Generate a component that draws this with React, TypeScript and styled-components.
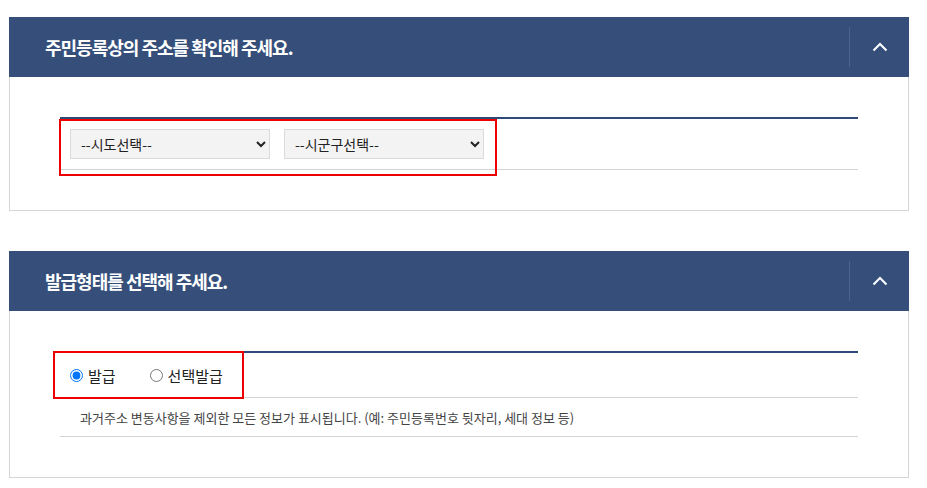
import React from "react";
import styled, { createGlobalStyle } from "styled-components";

const Global = createGlobalStyle`
  html, body { margin: 0; padding: 0; background: #ffffff; }
  body { font-family: "Noto Sans CJK KR", "Noto Sans", sans-serif; color: #222; }
`;

const Page = styled.div`
  padding: 17px 18px 11px 9px;
  display: flex;
  flex-direction: column;
  gap: 40px;
`;

const Panel = styled.section`
  display: flex;
  flex-direction: column;
  border: 1px solid #d6d6d6;
  border-top: none;
`;

const Header = styled.header`
  height: 60px;
  margin: 0 -1px;
  background: #354f7a;
  display: flex;
  align-items: center;
`;

const Title = styled.h2`
  flex: 1;
  margin: 0;
  padding-left: 36px;
  color: #ffffff;
  font-size: 18px;
  font-weight: 700;
  letter-spacing: -1px;
`;

const Toggle = styled.button`
  width: 60px;
  height: 40px;
  border: none;
  border-left: 1px solid #4a6390;
  background: transparent;
  display: flex;
  align-items: center;
  justify-content: center;
  padding: 0;
  cursor: pointer;
`;

const Body = styled.div`
  position: relative;
  padding: 40px 50px 40px 50px;
`;

const Table = styled.div`
  border-top: 2px solid #2f4a77;
  display: flex;
  flex-direction: column;
`;

const Row = styled.div<{ $h: number; $pad: number }>`
  height: ${(p) => p.$h}px;
  padding-left: ${(p) => p.$pad}px;
  border-bottom: 1px solid #d4d4d4;
  display: flex;
  align-items: center;
  gap: 14px;
`;

const Select = styled.select`
  width: 200px;
  height: 30px;
  background: #f3f3f3;
  border: 1px solid #dadada;
  border-radius: 0;
  font-family: "Noto Sans CJK KR", sans-serif;
  font-size: 14px;
  color: #222;
  padding: 0 6px 0 6px;
  outline: none;
`;

const RadioLabel = styled.label<{ $gap: number }>`
  display: flex;
  align-items: center;
  gap: 5px;
  margin-right: ${(p) => p.$gap}px;
  font-size: 15px;
  color: #222;
`;

const Radio = styled.input`
  margin: 0;
  width: 13px;
  height: 13px;
`;

const Desc = styled.p`
  margin: 0;
  font-size: 13px;
  color: #444;
`;

const Mark = styled.div<{ $l: number; $t: number; $w: number; $h: number }>`
  position: absolute;
  left: ${(p) => p.$l}px;
  top: ${(p) => p.$t}px;
  width: ${(p) => p.$w}px;
  height: ${(p) => p.$h}px;
  border: 2px solid #ee0000;
  box-sizing: border-box;
  pointer-events: none;
`;

const Chevron = () => (
  <svg width="16" height="10" viewBox="0 0 16 10">
    <path d="M1.5 8.5 L8 2 L14.5 8.5" fill="none" stroke="#fff" strokeWidth="2" />
  </svg>
);

export default function App() {
  return (
    <>
      <Global />
      <Page>
        <Panel>
          <Header>
            <Title>주민등록상의 주소를 확인해 주세요.</Title>
            <Toggle aria-label="접기">
              <Chevron />
            </Toggle>
          </Header>
          <Body>
            <Table>
              <Row $h={50} $pad={10}>
                <Select defaultValue="">
                  <option value="">--시도선택--</option>
                </Select>
                <Select defaultValue="">
                  <option value="">--시군구선택--</option>
                </Select>
              </Row>
            </Table>
            <Mark $l={49} $t={42} $w={438} $h={57} />
          </Body>
        </Panel>
        <Panel>
          <Header>
            <Title>발급형태를 선택해 주세요.</Title>
            <Toggle aria-label="접기">
              <Chevron />
            </Toggle>
          </Header>
          <Body>
            <Table>
              <Row $h={44} $pad={10}>
                <RadioLabel $gap={20}>
                  <Radio type="radio" name="type" defaultChecked />
                  발급
                </RadioLabel>
                <RadioLabel $gap={0}>
                  <Radio type="radio" name="type" />
                  선택발급
                </RadioLabel>
              </Row>
              <Row $h={38} $pad={20}>
                <Desc>과거주소 변동사항을 제외한 모든 정보가 표시됩니다. (예: 주민등록번호 뒷자리, 세대 정보 등)</Desc>
              </Row>
            </Table>
            <Mark $l={43} $t={40} $w={191} $h={48} />
          </Body>
        </Panel>
      </Page>
    </>
  );
}
